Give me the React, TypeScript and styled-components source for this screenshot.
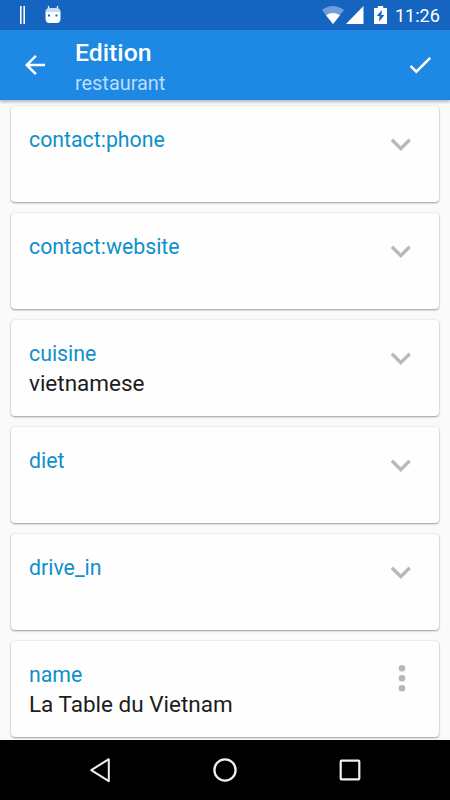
import React from 'react';
import styled, { createGlobalStyle } from 'styled-components';

const GlobalStyle = createGlobalStyle`
  * { box-sizing: border-box; }
  body { margin: 0; background: #000; font-family: Roboto, sans-serif; }
  svg { display: block; flex: none; }
`;

const Screen = styled.div`
  width: 450px;
  height: 800px;
  display: flex;
  flex-direction: column;
  overflow: hidden;
  background: #fafafa;
`;

const StatusBar = styled.header`
  flex: none;
  height: 30px;
  display: flex;
  align-items: center;
  padding: 0 10px 0 19px;
  background: #1565c0;
  color: #fff;
`;

const Notifications = styled.div`
  display: flex;
  align-items: center;
  gap: 19px;
  flex: 1;
  padding-bottom: 1px;
`;

const Indicators = styled.div`
  display: flex;
  align-items: center;
`;

const Clock = styled.time`
  margin-left: 8px;
  width: 45px;
  font-size: 18px;
  line-height: 30px;
  padding-top: 1px;
  font-weight: 400;
  white-space: nowrap;
`;

const AppBar = styled.div`
  flex: none;
  z-index: 1;
  height: 70px;
  display: flex;
  align-items: center;
  padding: 0 18px 0 20px;
  background: #1e88e5;
  box-shadow: 0 2px 3px rgba(0, 0, 0, 0.28);
`;

const IconButton = styled.button`
  border: 0;
  padding: 0;
  background: none;
  color: inherit;
  display: flex;
`;

const Heading = styled.div`
  flex: 1;
  padding: 5px 0 0 25px;
`;

const Title = styled.h1`
  margin: 0;
  font-size: 24.8px;
  line-height: 31px;
  font-weight: 500;
  color: #fff;
`;

const Subtitle = styled.p`
  margin: 2px 0 0;
  font-size: 19.9px;
  line-height: 28px;
  color: #bbdefb;
`;

const TagList = styled.main`
  flex: 1;
  min-height: 0;
  overflow: hidden;
  display: flex;
  flex-direction: column;
  gap: 11px;
  padding: 6px 11px 0;
`;

const Card = styled.section`
  flex: none;
  height: 96px;
  display: flex;
  justify-content: space-between;
  padding: 18px 26px 0 18px;
  border-radius: 4px;
  background: #fffefe;
  box-shadow: 0 1px 2px rgba(0, 0, 0, 0.36), 0 0 2px rgba(0, 0, 0, 0.12);
`;

const TagText = styled.div`
  padding-top: 1px;
`;

const TagKey = styled.div`
  font-size: 21.3px;
  line-height: 30px;
  color: #0d90cb;
`;

const TagValue = styled.div`
  font-size: 22.5px;
  line-height: 28px;
  color: #1c1c1c;
`;

const NavigationBar = styled.nav`
  flex: none;
  height: 60px;
  display: flex;
  align-items: center;
  justify-content: center;
  gap: 95px;
  background: #000;
  color: #f0f0f0;
`;

const BarsIcon = () => (
  <svg width="7" height="18" viewBox="0 0 7 18" fill="#fff">
    <path d="M1 0h1.600v18H1zM4.400 0H6v18H4.400z" />
  </svg>
);

const RobotIcon = () => (
  <svg width="16" height="19" viewBox="0 0 16 19">
    <path d="M3.200 1 4.500 5M12.800 1 11.500 5" stroke="#fff" strokeWidth="1.200" />
    <path d="M.5 7h15v6.500q0 4.500-4 4.500h-7q-4 0-4-4.500z" fill="#fff" />
    <path d="M.5 7q0-3.800 4-4h7q4 .2 4 4z" fill="#c3ddf4" />
    <path d="M3 9.500h2v2H3zM10.500 9.500h2v2h-2z" fill="#1565c0" />
  </svg>
);

const WifiIcon = () => (
  <svg width="22" height="18" viewBox="0 0 22 18">
    <path d="M0 4Q11-4 22 4L11 18z" fill="#6c9fdb" />
    <path d="M4 9.200Q11 4.600 18 9.200L11 18z" fill="#fff" />
  </svg>
);

const SignalIcon = () => (
  <svg width="18" height="18" viewBox="0 0 18 18">
    <path d="M17.500 0v18H0z" fill="#fff" />
  </svg>
);

const BatteryIcon = () => (
  <svg width="13" height="18" viewBox="0 0 12 18" preserveAspectRatio="none">
    <path d="M3.500 0h5v2H12v16H0V2h3.500z" fill="#fff" />
    <path d="M7.300 4 2.500 10h2.700L4.600 15.700 9.600 9H6.800z" fill="#1565c0" />
  </svg>
);

const BackIcon = () => (
  <svg width="30" height="30" viewBox="0 0 24 24" fill="#fff">
    <path d="M20 11H7.830l5.590-5.590L12 4l-8 8 8 8 1.410-1.410L7.830 13H20z" />
  </svg>
);

const CheckIcon = () => (
  <svg width="24" height="20" viewBox="0 0 24 20">
    <path d="m2.500 10.800 5.800 5.800L22.200 2.800" fill="none" stroke="#fff" strokeWidth="2.600" />
  </svg>
);

const ChevronIcon = () => (
  <svg width="24" height="40" viewBox="0 0 24 40">
    <path d="m2.900 15.700 8.900 8.900 8.900-8.900" fill="none" stroke="#b9b9b9" strokeWidth="3.400" />
  </svg>
);

const MoreIcon = () => (
  <svg width="24" height="40" viewBox="0 0 24 40" fill="#b7b7b7">
    <circle cx="13" cy="9.300" r="3.300" />
    <circle cx="13" cy="19.300" r="3.300" />
    <circle cx="13" cy="29.300" r="3.300" />
  </svg>
);

const NavBackIcon = () => (
  <svg width="30" height="30" viewBox="0 0 30 30" fill="none" stroke="currentColor">
    <path d="M23.800 4.200v22L6.200 15.200z" strokeWidth="2" strokeLinejoin="round" />
  </svg>
);

const NavHomeIcon = () => (
  <svg width="30" height="30" viewBox="0 0 30 30" fill="none" stroke="currentColor">
    <circle cx="15" cy="15" r="10.600" strokeWidth="2.300" />
  </svg>
);

const NavRecentIcon = () => (
  <svg width="30" height="30" viewBox="0 0 30 30" fill="none" stroke="currentColor">
    <rect x="5.700" y="5.700" width="18.600" height="18.600" rx=".8" strokeWidth="2.200" />
  </svg>
);

interface Tag {
  name: string;
  value?: string;
  action: 'expand' | 'menu';
}

const tags: Tag[] = [
  { name: 'contact:phone', action: 'expand' },
  { name: 'contact:website', action: 'expand' },
  { name: 'cuisine', value: 'vietnamese', action: 'expand' },
  { name: 'diet', action: 'expand' },
  { name: 'drive_in', action: 'expand' },
  { name: 'name', value: 'La Table du Vietnam', action: 'menu' },
];

const TagCard = ({ name, value, action }: Tag) => (
  <Card>
    <TagText>
      <TagKey>{name}</TagKey>
      {value && <TagValue>{value}</TagValue>}
    </TagText>
    <div>
      <IconButton aria-label={action}>
        {action === 'menu' ? <MoreIcon /> : <ChevronIcon />}
      </IconButton>
    </div>
  </Card>
);

const SignalGroup = styled.div`
  display: flex;
  align-items: center;
  gap: 2px;
  margin-right: 10px;
`;

export default function App() {
  return (
    <>
      <GlobalStyle />
      <Screen>
        <StatusBar>
          <Notifications>
            <BarsIcon />
            <RobotIcon />
          </Notifications>
          <Indicators>
            <SignalGroup>
              <WifiIcon />
              <SignalIcon />
            </SignalGroup>
            <BatteryIcon />
            <Clock>11:26</Clock>
          </Indicators>
        </StatusBar>
        <AppBar>
          <IconButton aria-label="back"><BackIcon /></IconButton>
          <Heading>
            <Title>Edition</Title>
            <Subtitle>restaurant</Subtitle>
          </Heading>
          <IconButton aria-label="save"><CheckIcon /></IconButton>
        </AppBar>
        <TagList>
          {tags.map((tag) => <TagCard key={tag.name} {...tag} />)}
        </TagList>
        <NavigationBar>
          <IconButton aria-label="back"><NavBackIcon /></IconButton>
          <IconButton aria-label="home"><NavHomeIcon /></IconButton>
          <IconButton aria-label="recent"><NavRecentIcon /></IconButton>
        </NavigationBar>
      </Screen>
    </>
  );
}
